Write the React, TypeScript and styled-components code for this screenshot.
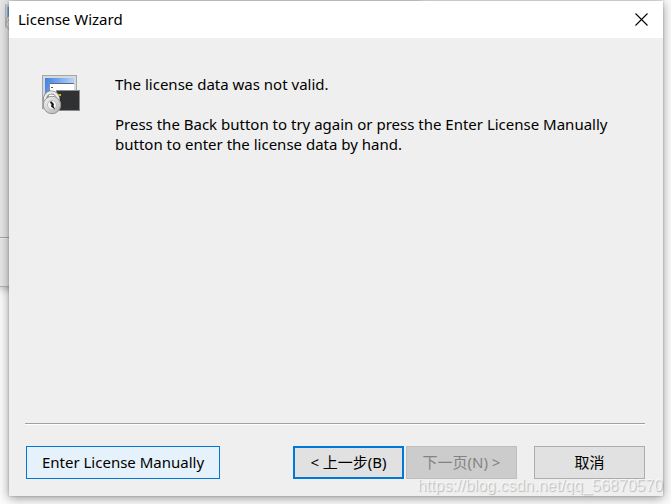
import React from "react";
import styled, { createGlobalStyle } from "styled-components";

const GlobalStyle = createGlobalStyle`
  *, *::before, *::after { box-sizing: border-box; }
  body {
    margin: 0;
    background: #fbfbfb;
    color: #000;
    font-family: "Noto Sans", "Noto Sans CJK SC", sans-serif;
    font-size: 15px;
    line-height: 20px;
  }
  button { font: inherit; color: inherit; margin: 0; }
`;

const Desktop = styled.div`
  position: relative;
  display: flex;
  min-height: 100vh;
  padding: 1px 8px 8px 9px;
  overflow: hidden;
`;

const BackWindow = styled.div`
  position: absolute;
  top: 0;
  left: 0;
  width: 420px;
  height: 287px;
  background: #e6e6e6;
  border-bottom: 1px solid #b4b4b4;
  box-shadow: 0 2px 8px rgba(0, 0, 0, 0.3);
`;

const BackRule = styled.div`
  margin-top: 237px;
  border-top: 1px solid #a5a5a5;
  border-bottom: 1px solid #f2f2f2;
`;

const BackIcon = styled.div`
  position: absolute;
  top: 4px;
  left: 5px;
  line-height: 0;
  opacity: 0.8;

  svg { width: 32px; height: 28px; }
`;

const Dialog = styled.main`
  position: relative;
  flex: 1;
  display: flex;
  flex-direction: column;
  background: #efefef;
  box-shadow: 0 2px 10px rgba(0, 0, 0, 0.4), 0 0 2px rgba(0, 0, 0, 0.25);
`;

const TitleBar = styled.header`
  display: flex;
  align-items: center;
  justify-content: space-between;
  height: 37px;
  padding-left: 9px;
  background: #fff;
`;

const Title = styled.h1`
  margin: 0;
  padding-bottom: 2px;
  font-size: 15px;
  font-weight: 400;
`;

const CloseButton = styled.button`
  display: flex;
  align-items: center;
  justify-content: center;
  width: 44px;
  height: 36px;
  padding: 0;
  border: 0;
  background: transparent;
`;

const Content = styled.section`
  flex: 1;
  display: flex;
  gap: 33px;
  padding: 36px 33px;
`;

const IconCell = styled.div`
  flex: none;
  line-height: 0;
`;

const Message = styled.div`
  flex: 1;
`;

const Paragraph = styled.p`
  margin: 0 0 20px;
`;

const Footer = styled.footer`
  display: flex;
  align-items: center;
  margin: 0 18px 0 16px;
  padding: 22px 0 17px 1px;
  border-top: 1px solid #a0a0a0;
  box-shadow: inset 0 1px 0 #fff;
`;

const Spacer = styled.div`
  flex: 1;
`;

const Nav = styled.nav`
  display: flex;
  gap: 2px;
  margin-right: 17px;
`;

type Tone = "normal" | "primary" | "hover";

const borders: Record<Tone, string> = {
  normal: "1px solid #adadad",
  primary: "2px solid #0078d7",
  hover: "1px solid #0078d7",
};

const PushButton = styled.button<{ $tone?: Tone; $wide?: boolean }>`
  width: ${(p) => (p.$wide ? 194 : 111)}px;
  height: 33px;
  padding: 0 0 2px;
  border: ${(p) => borders[p.$tone ?? "normal"]};
  background: ${(p) => (p.$tone === "hover" ? "#e5f1fb" : "#e1e1e1")};
  white-space: nowrap;

  &:disabled {
    color: #838383;
    background: #cccccc;
    border-color: #bfbfbf;
  }
`;

const Watermark = styled.div`
  position: absolute;
  right: 8px;
  bottom: 8px;
  font: 16px/20px "Liberation Sans", Arial, sans-serif;
  color: rgba(255, 255, 255, 0.6);
  text-shadow: 1px 1px 1px rgba(0, 0, 0, 0.22);
  pointer-events: none;
`;

function LicenseIcon() {
  return (
    <svg width="40" height="42" viewBox="0 0 40 42" preserveAspectRatio="none" aria-hidden="true">
      <defs>
        <linearGradient id="screen" x1="0" y1="0" x2="1" y2="0.3">
          <stop offset="0" stopColor="#3d7fe0" />
          <stop offset="1" stopColor="#bcd8fc" />
        </linearGradient>
        <linearGradient id="metal" x1="0" y1="0" x2="1" y2="1">
          <stop offset="0" stopColor="#f6f6f6" />
          <stop offset="1" stopColor="#b0b0b0" />
        </linearGradient>
      </defs>
      <rect x="0.5" y="1.5" width="34" height="33" fill="#d6d8da" stroke="#a3a7ab" />
      <rect x="3" y="4" width="29" height="27" fill="url(#screen)" />
      <rect x="7" y="9" width="25" height="20" fill="#fff" />
      <path d="M7 9.5h25" stroke="#5a6a84" />
      <path d="M7.5 9v12" stroke="#7c8ea8" />
      <path d="M9 13.5h2" stroke="#555" />
      <rect x="14.5" y="16.5" width="23" height="20" fill="#303132" stroke="#8a8a8a" />
      <path d="M16 21h3" stroke="#c8bd12" strokeWidth="2" />
      <path d="M3 28v-2a6.5 6.5 0 0 1 13-2v3" fill="none" stroke="#888" strokeWidth="4" />
      <path d="M3 28v-2a6.5 6.5 0 0 1 13-2v3" fill="none" stroke="#ececec" strokeWidth="2.4" />
      <circle cx="10" cy="31" r="8.7" fill="url(#metal)" stroke="#959595" />
      <circle cx="10" cy="31" r="4.5" fill="#f4f4f4" stroke="#bcbcbc" />
      <path d="M9 27l3 3-0.5 2 1.5 3.5-4-3 0.5-2-1.5-2z" fill="#151515" />
    </svg>
  );
}

export default function App() {
  return (
    <>
      <GlobalStyle />
      <Desktop>
        <BackWindow>
          <BackIcon>
            <LicenseIcon />
          </BackIcon>
          <BackRule />
        </BackWindow>
        <Dialog role="dialog" aria-labelledby="dialog-title">
          <TitleBar>
            <Title id="dialog-title">License Wizard</Title>
            <CloseButton type="button" aria-label="Close">
              <svg width="13" height="13" viewBox="0 0 13 13" aria-hidden="true">
                <path d="M0.5 0.5l12 12M12.5 0.5l-12 12" stroke="#000" strokeWidth="1.1" />
              </svg>
            </CloseButton>
          </TitleBar>
          <Content>
            <IconCell>
              <LicenseIcon />
            </IconCell>
            <Message>
              <Paragraph>The license data was not valid.</Paragraph>
              <Paragraph>
                Press the Back button to try again or press the Enter License Manually button to
                enter the license data by hand.
              </Paragraph>
            </Message>
          </Content>
          <Footer>
            <PushButton type="button" $tone="hover" $wide>
              Enter License Manually
            </PushButton>
            <Spacer />
            <Nav aria-label="Wizard steps">
              <PushButton type="button" $tone="primary">
                &lt; 上一步(B)
              </PushButton>
              <PushButton type="button" disabled>
                下一页(N) &gt;
              </PushButton>
            </Nav>
            <PushButton type="button">取消</PushButton>
          </Footer>
        </Dialog>
        <Watermark>https://blog.csdn.net/qq_56870570</Watermark>
      </Desktop>
    </>
  );
}
